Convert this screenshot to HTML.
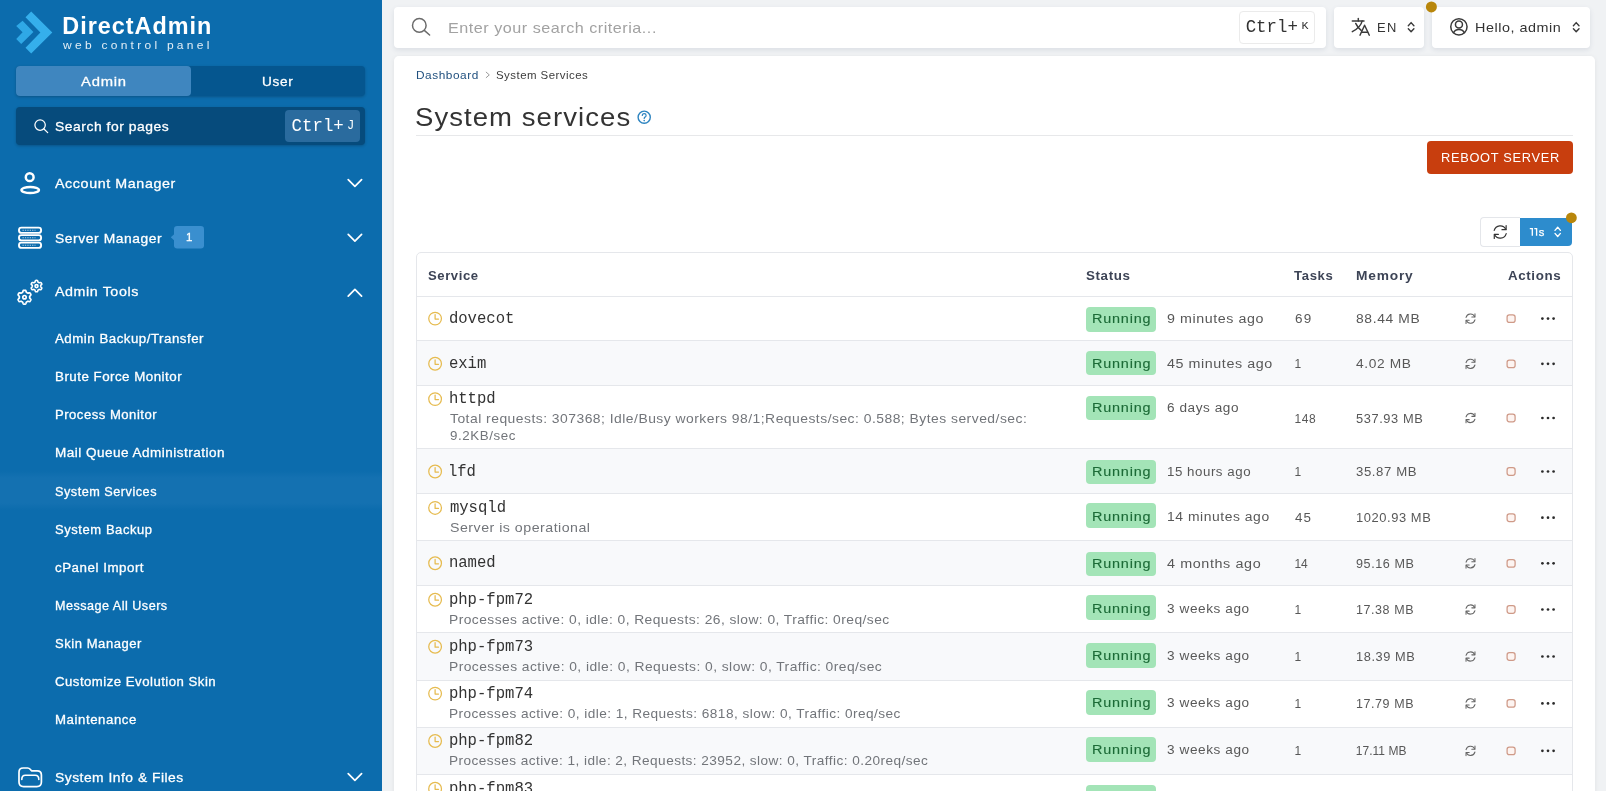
<!DOCTYPE html>
<html lang="en">
<head>
<meta charset="utf-8">
<title>System services - DirectAdmin</title>
<style>
*{box-sizing:border-box;margin:0;padding:0}
html,body{width:1606px;height:791px;overflow:hidden}
body{background:#f0f2f4;font-family:"Liberation Sans",sans-serif;color:#333;position:relative}
.tx{position:absolute;white-space:nowrap;transform-origin:0 50%}
.mono{font-family:"Liberation Mono",monospace}
#side .tx{-webkit-text-stroke:.28px #fff}
#side .mono,#side .thin{-webkit-text-stroke:0}
.a{position:absolute}
#app{position:absolute;left:0;top:0;width:1606px;height:791px;overflow:hidden;will-change:transform}
#side{position:absolute;left:0;top:0;width:382px;height:791px;background:#0c6cad}
.tabs{position:absolute;left:16px;top:66px;width:349px;height:30px;border-radius:4px;background:#05568f;box-shadow:0 1px 3px rgba(0,0,0,.22)}
.tabs .on{position:absolute;left:0;top:0;width:175px;height:30px;border-radius:4px;background:#3f86bf}
.psearch{position:absolute;left:16px;top:107px;width:349px;height:37.5px;border-radius:4px;background:#064b7c;box-shadow:0 1px 3px rgba(0,0,0,.22)}
.kbd1{position:absolute;left:285px;top:110px;width:75px;height:31.8px;border-radius:4px;background:#2a6b9e}
.actband{position:absolute;left:0;top:471px;width:382px;height:39px;background:linear-gradient(to bottom,#0c6cad 0,#1471b1 18%,#1471b1 82%,#0c6cad 100%)}
.box{position:absolute;top:7px;height:41px;background:#fff;border-radius:4px;box-shadow:0 2px 5px rgba(80,90,120,.13)}
#card{position:absolute;left:394px;top:56px;width:1201px;height:760px;background:#fff;border-radius:5px;box-shadow:0 1px 5px rgba(0,0,0,.07)}
#tbl{position:absolute;left:416px;top:252px;width:1157px;height:560px;border:1px solid #e5e7eb;border-radius:5px;background:#fff;overflow:hidden}
.row{position:absolute;left:417px;width:1155px;border-top:1px solid #e5e7eb}
.row.alt{background:#f8f9fb}
.bd{position:absolute;left:1086px;width:70px;height:24.6px;border-radius:4px;background:#a3e4b7}
</style>
</head>
<body>
<div id="app">
<div id="side"><div class="tabs"><div class="on"></div></div><div class="psearch"></div><div class="kbd1"></div><div class="actband"></div><svg class="a" style="left:0;top:0" width="382" height="791" viewBox="0 0 382 791"><path d="M31.2 11.4 L52.3 32.4 L31.2 53.5 L25.5 47.7 L40.4 32.4 L25.5 17.2 Z" fill="#35afec"/><path d="M22.6 20.8 L33.4 32 L21.2 44 L16.2 38.9 L22.6 32.3 L16.2 25.9 Z" fill="#2fa8e6"/><circle cx="40.1" cy="125.1" r="5.2" fill="none" stroke="#fff" stroke-width="1.25"/><path d="M44 129 L47.7 132.6" stroke="#fff" stroke-width="1.25" stroke-linecap="round"/><circle cx="29.7" cy="177.2" r="3.9" fill="none" stroke="#fff" stroke-width="2.5"/><ellipse cx="30.2" cy="190" rx="8.7" ry="3.1" fill="none" stroke="#fff" stroke-width="2.5"/><rect x="19" y="227.6" width="22.1" height="5.3" rx="2.4" fill="none" stroke="#fff" stroke-width="1.9"/><path d="M22.5 230.25 h13" stroke="#fff" stroke-width="0.8" stroke-dasharray="1.3 1.1" opacity=".85"/><rect x="19" y="235.1" width="22.1" height="5.3" rx="2.4" fill="none" stroke="#fff" stroke-width="1.9"/><path d="M22.5 237.75 h13" stroke="#fff" stroke-width="0.8" stroke-dasharray="1.3 1.1" opacity=".85"/><rect x="19" y="242.6" width="22.1" height="5.3" rx="2.4" fill="none" stroke="#fff" stroke-width="1.9"/><path d="M22.5 245.25 h13" stroke="#fff" stroke-width="0.8" stroke-dasharray="1.3 1.1" opacity=".85"/><path d="M170.8 237.3 L175 233.4 L175 241.2 Z" fill="#3a8fcf"/><rect x="174" y="226" width="30" height="22.5" rx="3.2" fill="#3a8fcf"/><path d="M29.70 297.20 L29.69 296.84 L29.65 296.48 L29.93 296.05 L30.48 295.49 L30.94 294.85 L30.80 294.39 L30.59 293.96 L30.35 293.54 L30.08 293.14 L29.75 292.79 L28.97 292.88 L28.21 293.07 L27.70 293.10 L27.41 292.89 L27.10 292.70 L26.78 292.53 L26.45 292.38 L26.22 291.92 L26.00 291.17 L25.69 290.45 L25.22 290.34 L24.74 290.30 L24.26 290.30 L23.78 290.34 L23.31 290.45 L23.00 291.17 L22.78 291.92 L22.55 292.38 L22.22 292.53 L21.90 292.70 L21.59 292.89 L21.30 293.10 L20.79 293.07 L20.03 292.88 L19.25 292.79 L18.92 293.14 L18.65 293.54 L18.41 293.96 L18.20 294.39 L18.06 294.85 L18.52 295.49 L19.07 296.05 L19.35 296.48 L19.31 296.84 L19.30 297.20 L19.31 297.56 L19.35 297.92 L19.07 298.35 L18.52 298.91 L18.06 299.55 L18.20 300.01 L18.41 300.44 L18.65 300.86 L18.92 301.26 L19.25 301.61 L20.03 301.52 L20.79 301.33 L21.30 301.30 L21.59 301.51 L21.90 301.70 L22.22 301.87 L22.55 302.02 L22.78 302.48 L23.00 303.23 L23.31 303.95 L23.78 304.06 L24.26 304.10 L24.74 304.10 L25.22 304.06 L25.69 303.95 L26.00 303.23 L26.22 302.48 L26.45 302.02 L26.78 301.87 L27.10 301.70 L27.41 301.51 L27.70 301.30 L28.21 301.33 L28.97 301.52 L29.75 301.61 L30.08 301.26 L30.35 300.86 L30.59 300.44 L30.80 300.01 L30.94 299.55 L30.48 298.91 L29.93 298.35 L29.65 297.92 L29.69 297.56 Z" fill="none" stroke="#fff" stroke-width="1.7" stroke-linejoin="round"/><circle cx="24.5" cy="297.2" r="1.7" fill="none" stroke="#fff" stroke-width="1.7"/><path d="M40.70 286.10 L40.69 285.81 L40.66 285.52 L40.91 285.16 L41.40 284.69 L41.82 284.16 L41.71 283.78 L41.53 283.42 L41.33 283.08 L41.11 282.75 L40.84 282.46 L40.17 282.56 L39.52 282.75 L39.09 282.79 L38.85 282.62 L38.60 282.46 L38.34 282.33 L38.07 282.21 L37.89 281.81 L37.73 281.15 L37.48 280.52 L37.10 280.43 L36.70 280.40 L36.30 280.40 L35.90 280.43 L35.52 280.52 L35.27 281.15 L35.11 281.81 L34.93 282.21 L34.66 282.33 L34.40 282.46 L34.15 282.62 L33.91 282.79 L33.48 282.75 L32.83 282.56 L32.16 282.46 L31.89 282.75 L31.67 283.08 L31.47 283.42 L31.29 283.78 L31.18 284.16 L31.60 284.69 L32.09 285.16 L32.34 285.52 L32.31 285.81 L32.30 286.10 L32.31 286.39 L32.34 286.68 L32.09 287.04 L31.60 287.51 L31.18 288.04 L31.29 288.42 L31.47 288.78 L31.67 289.12 L31.89 289.45 L32.16 289.74 L32.83 289.64 L33.48 289.45 L33.91 289.41 L34.15 289.58 L34.40 289.74 L34.66 289.87 L34.93 289.99 L35.11 290.39 L35.27 291.05 L35.52 291.68 L35.90 291.77 L36.30 291.80 L36.70 291.80 L37.10 291.77 L37.48 291.68 L37.73 291.05 L37.89 290.39 L38.07 289.99 L38.34 289.87 L38.60 289.74 L38.85 289.58 L39.09 289.41 L39.52 289.45 L40.17 289.64 L40.84 289.74 L41.11 289.45 L41.33 289.12 L41.53 288.78 L41.71 288.42 L41.82 288.04 L41.40 287.51 L40.91 287.04 L40.66 286.68 L40.69 286.39 Z" fill="none" stroke="#fff" stroke-width="1.6" stroke-linejoin="round"/><circle cx="36.5" cy="286.1" r="1.5" fill="none" stroke="#fff" stroke-width="1.6"/><path d="M19 772.2 q0 -4.2 4.2 -4.2 h4.4 q1.6 0 2.6 1.2 l1.3 1.6 h5.7 q4.2 0 4.2 4.2 v7 q0 4.6 -4.6 4.6 h-13.2 q-4.6 0 -4.6 -4.6 Z" fill="none" stroke="#fff" stroke-width="1.7" stroke-linejoin="round"/><path d="M21.8 779.4 q0 -4.2 3.6 -4.2 h9.8 q3.6 0 3.6 4.2" fill="none" stroke="#fff" stroke-width="1.6" stroke-linecap="round"/><path d="M348.2 179.6 L354.9 186.4 L361.6 179.6" fill="none" stroke="#fff" stroke-width="1.7" stroke-linecap="round" stroke-linejoin="round"/><path d="M348.2 234.29999999999998 L354.9 241.1 L361.6 234.29999999999998" fill="none" stroke="#fff" stroke-width="1.7" stroke-linecap="round" stroke-linejoin="round"/><path d="M348.2 296.20000000000005 L354.9 289.40000000000003 L361.6 296.20000000000005" fill="none" stroke="#fff" stroke-width="1.7" stroke-linecap="round" stroke-linejoin="round"/><path d="M348.2 773.6 L354.9 780.4 L361.6 773.6" fill="none" stroke="#fff" stroke-width="1.7" stroke-linecap="round" stroke-linejoin="round"/></svg><span class="tx" style="left:62.3px;top:11px;font-size:23.4px;line-height:30px;color:#fff;font-weight:bold;letter-spacing:1.002px;-webkit-text-stroke:0;">DirectAdmin</span><span class="tx" style="left:63.1px;top:39px;font-size:10px;line-height:14px;color:#fff;letter-spacing:2.724px;transform:scaleX(1.2000);opacity:.88;-webkit-text-stroke:0;">web control panel</span><span class="tx" style="left:81.0px;top:73px;font-size:13px;line-height:18px;color:#fff;letter-spacing:0.689px;transform:scaleX(1.1378);">Admin</span><span class="tx" style="left:261.66px;top:73px;font-size:13px;line-height:18px;color:#fff;letter-spacing:0.680px;transform:scaleX(1.0425);">User</span><span class="tx" style="left:54.7px;top:118px;font-size:13px;line-height:18px;color:#fff;letter-spacing:0.499px;transform:scaleX(1.0673);">Search for pages</span><span class="tx mono" style="left:291.6px;top:116px;font-size:17.4px;line-height:22px;color:#fff;transform:scaleY(1.06);transform-origin:0 74%;">Ctrl+</span><span class="tx mono" style="left:347.1px;top:119px;font-size:12px;line-height:14px;color:#fff;">J</span><span class="tx" style="left:54.9px;top:174px;font-size:13px;line-height:19px;color:#fff;letter-spacing:0.551px;transform:scaleX(1.0972);">Account Manager</span><span class="tx" style="left:54.9px;top:229px;font-size:13px;line-height:19px;color:#fff;letter-spacing:0.544px;transform:scaleX(1.0639);">Server Manager</span><span class="tx" style="left:186px;top:228px;font-size:11.5px;line-height:18px;color:#fff;">1</span><span class="tx" style="left:54.9px;top:282px;font-size:13px;line-height:19px;color:#fff;letter-spacing:0.537px;transform:scaleX(1.0968);">Admin Tools</span><span class="tx" style="left:54.9px;top:331px;font-size:12px;line-height:17px;color:#fff;letter-spacing:0.470px;transform:scaleX(1.1053);">Admin Backup/Transfer</span><span class="tx" style="left:54.9px;top:369px;font-size:12px;line-height:17px;color:#fff;letter-spacing:0.443px;transform:scaleX(1.1103);">Brute Force Monitor</span><span class="tx" style="left:54.9px;top:407px;font-size:12px;line-height:17px;color:#fff;letter-spacing:0.466px;transform:scaleX(1.0898);">Process Monitor</span><span class="tx" style="left:54.9px;top:445px;font-size:12px;line-height:17px;color:#fff;letter-spacing:0.439px;transform:scaleX(1.1255);">Mail Queue Administration</span><span class="tx" style="left:54.9px;top:484px;font-size:12px;line-height:17px;color:#fff;letter-spacing:0.480px;transform:scaleX(1.0564);">System Services</span><span class="tx" style="left:54.9px;top:522px;font-size:12px;line-height:17px;color:#fff;letter-spacing:0.525px;transform:scaleX(1.0823);">System Backup</span><span class="tx" style="left:54.9px;top:560px;font-size:12px;line-height:17px;color:#fff;letter-spacing:0.469px;transform:scaleX(1.1118);">cPanel Import</span><span class="tx" style="left:54.9px;top:598px;font-size:12px;line-height:17px;color:#fff;letter-spacing:0.471px;transform:scaleX(1.0487);">Message All Users</span><span class="tx" style="left:54.9px;top:636px;font-size:12px;line-height:17px;color:#fff;letter-spacing:0.507px;transform:scaleX(1.0852);">Skin Manager</span><span class="tx" style="left:54.9px;top:674px;font-size:12px;line-height:17px;color:#fff;letter-spacing:0.443px;transform:scaleX(1.0984);">Customize Evolution Skin</span><span class="tx" style="left:54.9px;top:712px;font-size:12px;line-height:17px;color:#fff;letter-spacing:0.520px;transform:scaleX(1.1006);">Maintenance</span><span class="tx" style="left:54.9px;top:768px;font-size:13px;line-height:19px;color:#fff;letter-spacing:0.470px;transform:scaleX(1.0641);">System Info &amp; Files</span></div>
<div class="box" style="left:394px;width:931.6px"></div><div class="box" style="left:1333.8px;width:90.4px"></div><div class="box" style="left:1431.7px;width:158.1px"></div><div class="a" style="left:1239px;top:11.2px;width:75.6px;height:32.4px;border:1px solid #ebebeb;border-radius:4px;background:#fff"></div><div id="card"></div><span class="tx" style="left:448.19px;top:18px;font-size:14.6px;line-height:20px;color:#a2a2a2;letter-spacing:0.465px;transform:scaleX(1.1071);">Enter your search criteria...</span><span class="tx mono" style="left:1245.7px;top:17px;font-size:17.4px;line-height:22px;color:#333;transform:scaleY(1.06);transform-origin:0 74%;">Ctrl+</span><span class="tx mono" style="left:1301.6px;top:19px;font-size:11.6px;line-height:14px;color:#333;">K</span><span class="tx" style="left:1377.07px;top:20px;font-size:12.6px;line-height:17px;color:#333;letter-spacing:1.234px;transform:scaleX(1.0264);">EN</span><span class="tx" style="left:1475.48px;top:19px;font-size:12.8px;line-height:18px;color:#333;letter-spacing:0.479px;transform:scaleX(1.1225);">Hello, admin</span><span class="tx" style="left:416.0px;top:68px;font-size:11.2px;line-height:15px;color:#1f4f7e;letter-spacing:0.513px;transform:scaleX(1.0595);">Dashboard</span><span class="tx" style="left:495.7px;top:68px;font-size:11.2px;line-height:15px;color:#3c3c3c;letter-spacing:0.450px;transform:scaleX(1.0243);">System Services</span><span class="tx" style="left:414.92px;top:100px;font-size:25.4px;line-height:34px;color:#333;letter-spacing:0.985px;transform:scaleX(1.0832);">System services</span><div class="a" style="left:416px;top:135px;width:1157px;height:1px;background:#e7e8ea"></div><div class="a" style="left:1427px;top:141px;width:146px;height:33px;border-radius:4px;background:#c83e0e"></div><span class="tx" style="left:1440.59px;top:150px;font-size:12.7px;line-height:17px;color:#fff;letter-spacing:0.677px;transform:scaleX(1.0112);">REBOOT SERVER</span><div class="a" style="left:1480px;top:217px;width:40.4px;height:29.6px;border:1px solid #e4e6ea;border-right:0;border-radius:4px 0 0 4px;background:#fff"></div><div class="a" style="left:1520px;top:218px;width:52px;height:28px;border-radius:0 4px 4px 0;background:#2d8ccd"></div><span class="tx" style="left:1538.8px;top:224px;font-size:11.2px;line-height:16px;color:#fff;-webkit-text-stroke:.25px #fff;">s</span><div id="tbl"></div><span class="tx" style="left:427.7px;top:268px;font-size:12px;line-height:17px;color:#3d4456;font-weight:bold;letter-spacing:0.540px;transform:scaleX(1.0893);">Service</span><span class="tx" style="left:1085.9px;top:268px;font-size:12px;line-height:17px;color:#3d4456;font-weight:bold;letter-spacing:0.557px;transform:scaleX(1.1135);">Status</span><span class="tx" style="left:1294.3px;top:268px;font-size:12px;line-height:17px;color:#3d4456;font-weight:bold;letter-spacing:0.630px;transform:scaleX(1.0895);">Tasks</span><span class="tx" style="left:1356.1px;top:268px;font-size:12px;line-height:17px;color:#3d4456;font-weight:bold;letter-spacing:0.698px;transform:scaleX(1.1459);">Memory</span><span class="tx" style="left:1507.8px;top:268px;font-size:12px;line-height:17px;color:#3d4456;font-weight:bold;letter-spacing:0.556px;transform:scaleX(1.1119);">Actions</span><div class="row" style="top:296px;height:44px"></div><span class="tx mono" style="left:448.9px;top:309px;font-size:15.6px;line-height:20px;color:#333;">dovecot</span><div class="bd" style="top:307px;height:25px"></div><span class="tx" style="left:1091.8px;top:310px;font-size:12px;line-height:18px;color:#1c6b37;letter-spacing:0.676px;transform:scaleX(1.2000);-webkit-text-stroke:.12px #1c6b37;">Running</span><span class="tx" style="left:1167.2px;top:311px;font-size:12px;line-height:17px;color:#585858;letter-spacing:0.475px;transform:scaleX(1.1879);">9 minutes ago</span><span class="tx" style="left:1294.6px;top:311px;font-size:12px;line-height:17px;color:#585858;letter-spacing:1.029px;transform:scaleX(1.1222);">69</span><span class="tx" style="left:1355.8px;top:311px;font-size:12px;line-height:17px;color:#585858;letter-spacing:0.552px;transform:scaleX(1.1535);">88.44 MB</span><div class="row alt" style="top:340px;height:45px"></div><span class="tx mono" style="left:448.9px;top:354px;font-size:15.6px;line-height:20px;color:#333;">exim</span><div class="bd" style="top:351px;height:24px"></div><span class="tx" style="left:1091.8px;top:355px;font-size:12px;line-height:18px;color:#1c6b37;letter-spacing:0.676px;transform:scaleX(1.2000);-webkit-text-stroke:.12px #1c6b37;">Running</span><span class="tx" style="left:1167.2px;top:356px;font-size:12px;line-height:17px;color:#585858;letter-spacing:0.477px;transform:scaleX(1.1921);">45 minutes ago</span><span class="tx" style="left:1294.6px;top:356px;font-size:12px;line-height:17px;color:#585858;">1</span><span class="tx" style="left:1355.8px;top:356px;font-size:12px;line-height:17px;color:#585858;letter-spacing:0.561px;transform:scaleX(1.1447);">4.02 MB</span><div class="row" style="top:385px;height:63px"></div><span class="tx mono" style="left:448.9px;top:389px;font-size:15.6px;line-height:20px;color:#333;">httpd</span><span class="tx" style="left:449.9px;top:411px;font-size:12.2px;line-height:17px;color:#72757a;letter-spacing:0.422px;transform:scaleX(1.1393);">Total requests: 307368; Idle/Busy workers 98/1;Requests/sec: 0.588; Bytes served/sec:</span><span class="tx" style="left:449.9px;top:428px;font-size:12.2px;line-height:17px;color:#72757a;letter-spacing:0.522px;transform:scaleX(1.0950);">9.2KB/sec</span><div class="bd" style="top:396px;height:24px"></div><span class="tx" style="left:1091.8px;top:399px;font-size:12px;line-height:18px;color:#1c6b37;letter-spacing:0.676px;transform:scaleX(1.2000);-webkit-text-stroke:.12px #1c6b37;">Running</span><span class="tx" style="left:1167.2px;top:400px;font-size:12px;line-height:17px;color:#585858;letter-spacing:0.494px;transform:scaleX(1.1311);">6 days ago</span><span class="tx" style="left:1294.6px;top:411px;font-size:12px;line-height:17px;color:#585858;letter-spacing:0.576px;">148</span><span class="tx" style="left:1355.8px;top:411px;font-size:12px;line-height:17px;color:#585858;letter-spacing:0.546px;transform:scaleX(1.0689);">537.93 MB</span><div class="row alt" style="top:448px;height:45px"></div><span class="tx mono" style="left:447.9px;top:462px;font-size:15.6px;line-height:20px;color:#333;">lfd</span><div class="bd" style="top:460px;height:24px"></div><span class="tx" style="left:1091.8px;top:463px;font-size:12px;line-height:18px;color:#1c6b37;letter-spacing:0.676px;transform:scaleX(1.2000);-webkit-text-stroke:.12px #1c6b37;">Running</span><span class="tx" style="left:1167.2px;top:464px;font-size:12px;line-height:17px;color:#585858;letter-spacing:0.482px;transform:scaleX(1.1086);">15 hours ago</span><span class="tx" style="left:1294.6px;top:464px;font-size:12px;line-height:17px;color:#585858;">1</span><span class="tx" style="left:1355.8px;top:464px;font-size:12px;line-height:17px;color:#585858;letter-spacing:0.552px;transform:scaleX(1.0973);">35.87 MB</span><div class="row" style="top:493px;height:47px"></div><span class="tx mono" style="left:449.9px;top:498px;font-size:15.6px;line-height:20px;color:#333;">mysqld</span><span class="tx" style="left:449.9px;top:520px;font-size:12.2px;line-height:17px;color:#72757a;letter-spacing:0.418px;transform:scaleX(1.1655);">Server is operational</span><div class="bd" style="top:503px;height:25px"></div><span class="tx" style="left:1091.8px;top:508px;font-size:12px;line-height:18px;color:#1c6b37;letter-spacing:0.676px;transform:scaleX(1.2000);-webkit-text-stroke:.12px #1c6b37;">Running</span><span class="tx" style="left:1167.2px;top:509px;font-size:12px;line-height:17px;color:#585858;letter-spacing:0.477px;transform:scaleX(1.1571);">14 minutes ago</span><span class="tx" style="left:1294.6px;top:510px;font-size:12px;line-height:17px;color:#585858;letter-spacing:1.029px;transform:scaleX(1.1154);">45</span><span class="tx" style="left:1355.8px;top:510px;font-size:12px;line-height:17px;color:#585858;letter-spacing:0.541px;transform:scaleX(1.0751);">1020.93 MB</span><div class="row alt" style="top:540px;height:45px"></div><span class="tx mono" style="left:448.9px;top:553px;font-size:15.6px;line-height:20px;color:#333;">named</span><div class="bd" style="top:552px;height:24px"></div><span class="tx" style="left:1091.8px;top:555px;font-size:12px;line-height:18px;color:#1c6b37;letter-spacing:0.676px;transform:scaleX(1.2000);-webkit-text-stroke:.12px #1c6b37;">Running</span><span class="tx" style="left:1167.2px;top:556px;font-size:12px;line-height:17px;color:#585858;letter-spacing:0.500px;transform:scaleX(1.1969);">4 months ago</span><span class="tx" style="left:1294.6px;top:556px;font-size:12px;line-height:17px;color:#585858;letter-spacing:-0.374px;">14</span><span class="tx" style="left:1355.8px;top:556px;font-size:12px;line-height:17px;color:#585858;letter-spacing:0.552px;transform:scaleX(1.0502);">95.16 MB</span><div class="row" style="top:585px;height:47px"></div><span class="tx mono" style="left:448.9px;top:590px;font-size:15.6px;line-height:20px;color:#333;">php-fpm72</span><span class="tx" style="left:448.77px;top:612px;font-size:12.2px;line-height:17px;color:#72757a;letter-spacing:0.393px;transform:scaleX(1.1326);">Processes active: 0, idle: 0, Requests: 26, slow: 0, Traffic: 0req/sec</span><div class="bd" style="top:595px;height:25px"></div><span class="tx" style="left:1091.8px;top:600px;font-size:12px;line-height:18px;color:#1c6b37;letter-spacing:0.676px;transform:scaleX(1.2000);-webkit-text-stroke:.12px #1c6b37;">Running</span><span class="tx" style="left:1167.2px;top:601px;font-size:12px;line-height:17px;color:#585858;letter-spacing:0.510px;transform:scaleX(1.1333);">3 weeks ago</span><span class="tx" style="left:1294.6px;top:602px;font-size:12px;line-height:17px;color:#585858;">1</span><span class="tx" style="left:1355.8px;top:602px;font-size:12px;line-height:17px;color:#585858;letter-spacing:0.552px;transform:scaleX(1.0412);">17.38 MB</span><div class="row alt" style="top:632px;height:48px"></div><span class="tx mono" style="left:448.9px;top:637px;font-size:15.6px;line-height:20px;color:#333;">php-fpm73</span><span class="tx" style="left:448.77px;top:659px;font-size:12.2px;line-height:17px;color:#72757a;letter-spacing:0.392px;transform:scaleX(1.1346);">Processes active: 0, idle: 0, Requests: 0, slow: 0, Traffic: 0req/sec</span><div class="bd" style="top:643px;height:25px"></div><span class="tx" style="left:1091.8px;top:647px;font-size:12px;line-height:18px;color:#1c6b37;letter-spacing:0.676px;transform:scaleX(1.2000);-webkit-text-stroke:.12px #1c6b37;">Running</span><span class="tx" style="left:1167.2px;top:648px;font-size:12px;line-height:17px;color:#585858;letter-spacing:0.510px;transform:scaleX(1.1333);">3 weeks ago</span><span class="tx" style="left:1294.6px;top:649px;font-size:12px;line-height:17px;color:#585858;">1</span><span class="tx" style="left:1355.8px;top:649px;font-size:12px;line-height:17px;color:#585858;letter-spacing:0.552px;transform:scaleX(1.0647);">18.39 MB</span><div class="row" style="top:680px;height:47px"></div><span class="tx mono" style="left:448.9px;top:684px;font-size:15.6px;line-height:20px;color:#333;">php-fpm74</span><span class="tx" style="left:448.78px;top:706px;font-size:12.2px;line-height:17px;color:#72757a;letter-spacing:0.397px;transform:scaleX(1.1192);">Processes active: 0, idle: 1, Requests: 6818, slow: 0, Traffic: 0req/sec</span><div class="bd" style="top:690px;height:25px"></div><span class="tx" style="left:1091.8px;top:694px;font-size:12px;line-height:18px;color:#1c6b37;letter-spacing:0.676px;transform:scaleX(1.2000);-webkit-text-stroke:.12px #1c6b37;">Running</span><span class="tx" style="left:1167.2px;top:695px;font-size:12px;line-height:17px;color:#585858;letter-spacing:0.510px;transform:scaleX(1.1333);">3 weeks ago</span><span class="tx" style="left:1294.6px;top:696px;font-size:12px;line-height:17px;color:#585858;">1</span><span class="tx" style="left:1355.8px;top:696px;font-size:12px;line-height:17px;color:#585858;letter-spacing:0.552px;transform:scaleX(1.0412);">17.79 MB</span><div class="row alt" style="top:727px;height:47px"></div><span class="tx mono" style="left:448.9px;top:731px;font-size:15.6px;line-height:20px;color:#333;">php-fpm82</span><span class="tx" style="left:448.78px;top:753px;font-size:12.2px;line-height:17px;color:#72757a;letter-spacing:0.399px;transform:scaleX(1.1167);">Processes active: 1, idle: 2, Requests: 23952, slow: 0, Traffic: 0.20req/sec</span><div class="bd" style="top:737px;height:25px"></div><span class="tx" style="left:1091.8px;top:741px;font-size:12px;line-height:18px;color:#1c6b37;letter-spacing:0.676px;transform:scaleX(1.2000);-webkit-text-stroke:.12px #1c6b37;">Running</span><span class="tx" style="left:1167.2px;top:742px;font-size:12px;line-height:17px;color:#585858;letter-spacing:0.510px;transform:scaleX(1.1333);">3 weeks ago</span><span class="tx" style="left:1294.6px;top:743px;font-size:12px;line-height:17px;color:#585858;">1</span><span class="tx" style="left:1355.8px;top:743px;font-size:12px;line-height:17px;color:#585858;letter-spacing:0.019px;">17.11 MB</span><div class="row" style="top:774px;height:47px"></div><span class="tx mono" style="left:448.9px;top:779px;font-size:15.6px;line-height:20px;color:#333;">php-fpm83</span><span class="tx" style="left:448.77px;top:801px;font-size:12.2px;line-height:17px;color:#72757a;letter-spacing:0.392px;transform:scaleX(1.1346);">Processes active: 0, idle: 0, Requests: 0, slow: 0, Traffic: 0req/sec</span><div class="bd" style="top:785px;height:25px"></div><span class="tx" style="left:1091.8px;top:789px;font-size:12px;line-height:18px;color:#1c6b37;letter-spacing:0.676px;transform:scaleX(1.2000);-webkit-text-stroke:.12px #1c6b37;">Running</span><span class="tx" style="left:1167.2px;top:790px;font-size:12px;line-height:17px;color:#585858;letter-spacing:0.510px;transform:scaleX(1.1333);">3 weeks ago</span><span class="tx" style="left:1294.6px;top:791px;font-size:12px;line-height:17px;color:#585858;">1</span><span class="tx" style="left:1355.8px;top:791px;font-size:12px;line-height:17px;color:#585858;letter-spacing:0.552px;transform:scaleX(1.0502);">18.00 MB</span><svg class="a" style="left:416px;top:252px" width="1157" height="539" viewBox="416 252 1157 539"><circle cx="435.1" cy="318.6" r="6.35" fill="none" stroke="#e6bb4f" stroke-width="1.25"/><path d="M435.1 314.6 V319.1 H438.5" fill="none" stroke="#e6bb4f" stroke-width="1.25" stroke-linecap="round" stroke-linejoin="round"/><path d="M1466.06 317.41 A4.6 4.6 0 0 1 1474.67 316.66" fill="none" stroke="#666" stroke-width="1.05" stroke-linecap="round"/><path d="M1474.94 319.79 A4.6 4.6 0 0 1 1466.33 320.54" fill="none" stroke="#666" stroke-width="1.05" stroke-linecap="round"/><path d="M1474.97 313.80 L1474.97 316.96 L1471.82 316.96" fill="none" stroke="#666" stroke-width="1.05" stroke-linecap="round" stroke-linejoin="round"/><path d="M1466.03 323.40 L1466.03 320.24 L1469.18 320.24" fill="none" stroke="#666" stroke-width="1.05" stroke-linecap="round" stroke-linejoin="round"/><rect x="1507.1" y="314.8" width="8" height="7.6" rx="2.2" fill="#fdf4f1" stroke="#cf9a88" stroke-width="1.25"/><circle cx="1542.4" cy="318.6" r="1.35" fill="#2b2b2b"/><circle cx="1548" cy="318.6" r="1.35" fill="#2b2b2b"/><circle cx="1553.6" cy="318.6" r="1.35" fill="#2b2b2b"/><circle cx="435.1" cy="363.8" r="6.35" fill="none" stroke="#e6bb4f" stroke-width="1.25"/><path d="M435.1 359.8 V364.3 H438.5" fill="none" stroke="#e6bb4f" stroke-width="1.25" stroke-linecap="round" stroke-linejoin="round"/><path d="M1466.06 362.61 A4.6 4.6 0 0 1 1474.67 361.86" fill="none" stroke="#666" stroke-width="1.05" stroke-linecap="round"/><path d="M1474.94 364.99 A4.6 4.6 0 0 1 1466.33 365.74" fill="none" stroke="#666" stroke-width="1.05" stroke-linecap="round"/><path d="M1474.97 359.00 L1474.97 362.16 L1471.82 362.16" fill="none" stroke="#666" stroke-width="1.05" stroke-linecap="round" stroke-linejoin="round"/><path d="M1466.03 368.60 L1466.03 365.44 L1469.18 365.44" fill="none" stroke="#666" stroke-width="1.05" stroke-linecap="round" stroke-linejoin="round"/><rect x="1507.1" y="360.0" width="8" height="7.6" rx="2.2" fill="#fdf4f1" stroke="#cf9a88" stroke-width="1.25"/><circle cx="1542.4" cy="363.8" r="1.35" fill="#2b2b2b"/><circle cx="1548" cy="363.8" r="1.35" fill="#2b2b2b"/><circle cx="1553.6" cy="363.8" r="1.35" fill="#2b2b2b"/><circle cx="435.1" cy="399.1" r="6.35" fill="none" stroke="#e6bb4f" stroke-width="1.25"/><path d="M435.1 395.1 V399.6 H438.5" fill="none" stroke="#e6bb4f" stroke-width="1.25" stroke-linecap="round" stroke-linejoin="round"/><path d="M1466.06 416.81 A4.6 4.6 0 0 1 1474.67 416.06" fill="none" stroke="#666" stroke-width="1.05" stroke-linecap="round"/><path d="M1474.94 419.19 A4.6 4.6 0 0 1 1466.33 419.94" fill="none" stroke="#666" stroke-width="1.05" stroke-linecap="round"/><path d="M1474.97 413.20 L1474.97 416.36 L1471.82 416.36" fill="none" stroke="#666" stroke-width="1.05" stroke-linecap="round" stroke-linejoin="round"/><path d="M1466.03 422.80 L1466.03 419.64 L1469.18 419.64" fill="none" stroke="#666" stroke-width="1.05" stroke-linecap="round" stroke-linejoin="round"/><rect x="1507.1" y="414.2" width="8" height="7.6" rx="2.2" fill="#fdf4f1" stroke="#cf9a88" stroke-width="1.25"/><circle cx="1542.4" cy="418.0" r="1.35" fill="#2b2b2b"/><circle cx="1548" cy="418.0" r="1.35" fill="#2b2b2b"/><circle cx="1553.6" cy="418.0" r="1.35" fill="#2b2b2b"/><circle cx="435.1" cy="471.5" r="6.35" fill="none" stroke="#e6bb4f" stroke-width="1.25"/><path d="M435.1 467.5 V472.0 H438.5" fill="none" stroke="#e6bb4f" stroke-width="1.25" stroke-linecap="round" stroke-linejoin="round"/><rect x="1507.1" y="467.7" width="8" height="7.6" rx="2.2" fill="#fdf4f1" stroke="#cf9a88" stroke-width="1.25"/><circle cx="1542.4" cy="471.5" r="1.35" fill="#2b2b2b"/><circle cx="1548" cy="471.5" r="1.35" fill="#2b2b2b"/><circle cx="1553.6" cy="471.5" r="1.35" fill="#2b2b2b"/><circle cx="435.1" cy="507.9" r="6.35" fill="none" stroke="#e6bb4f" stroke-width="1.25"/><path d="M435.1 503.9 V508.4 H438.5" fill="none" stroke="#e6bb4f" stroke-width="1.25" stroke-linecap="round" stroke-linejoin="round"/><rect x="1507.1" y="513.9" width="8" height="7.6" rx="2.2" fill="#fdf4f1" stroke="#cf9a88" stroke-width="1.25"/><circle cx="1542.4" cy="517.7" r="1.35" fill="#2b2b2b"/><circle cx="1548" cy="517.7" r="1.35" fill="#2b2b2b"/><circle cx="1553.6" cy="517.7" r="1.35" fill="#2b2b2b"/><circle cx="435.1" cy="563.3" r="6.35" fill="none" stroke="#e6bb4f" stroke-width="1.25"/><path d="M435.1 559.3 V563.8 H438.5" fill="none" stroke="#e6bb4f" stroke-width="1.25" stroke-linecap="round" stroke-linejoin="round"/><path d="M1466.06 562.11 A4.6 4.6 0 0 1 1474.67 561.36" fill="none" stroke="#666" stroke-width="1.05" stroke-linecap="round"/><path d="M1474.94 564.49 A4.6 4.6 0 0 1 1466.33 565.24" fill="none" stroke="#666" stroke-width="1.05" stroke-linecap="round"/><path d="M1474.97 558.50 L1474.97 561.66 L1471.82 561.66" fill="none" stroke="#666" stroke-width="1.05" stroke-linecap="round" stroke-linejoin="round"/><path d="M1466.03 568.10 L1466.03 564.94 L1469.18 564.94" fill="none" stroke="#666" stroke-width="1.05" stroke-linecap="round" stroke-linejoin="round"/><rect x="1507.1" y="559.5" width="8" height="7.6" rx="2.2" fill="#fdf4f1" stroke="#cf9a88" stroke-width="1.25"/><circle cx="1542.4" cy="563.3" r="1.35" fill="#2b2b2b"/><circle cx="1548" cy="563.3" r="1.35" fill="#2b2b2b"/><circle cx="1553.6" cy="563.3" r="1.35" fill="#2b2b2b"/><circle cx="435.1" cy="599.7" r="6.35" fill="none" stroke="#e6bb4f" stroke-width="1.25"/><path d="M435.1 595.7 V600.2 H438.5" fill="none" stroke="#e6bb4f" stroke-width="1.25" stroke-linecap="round" stroke-linejoin="round"/><path d="M1466.06 608.31 A4.6 4.6 0 0 1 1474.67 607.56" fill="none" stroke="#666" stroke-width="1.05" stroke-linecap="round"/><path d="M1474.94 610.69 A4.6 4.6 0 0 1 1466.33 611.44" fill="none" stroke="#666" stroke-width="1.05" stroke-linecap="round"/><path d="M1474.97 604.70 L1474.97 607.86 L1471.82 607.86" fill="none" stroke="#666" stroke-width="1.05" stroke-linecap="round" stroke-linejoin="round"/><path d="M1466.03 614.30 L1466.03 611.14 L1469.18 611.14" fill="none" stroke="#666" stroke-width="1.05" stroke-linecap="round" stroke-linejoin="round"/><rect x="1507.1" y="605.7" width="8" height="7.6" rx="2.2" fill="#fdf4f1" stroke="#cf9a88" stroke-width="1.25"/><circle cx="1542.4" cy="609.5" r="1.35" fill="#2b2b2b"/><circle cx="1548" cy="609.5" r="1.35" fill="#2b2b2b"/><circle cx="1553.6" cy="609.5" r="1.35" fill="#2b2b2b"/><circle cx="435.1" cy="646.7" r="6.35" fill="none" stroke="#e6bb4f" stroke-width="1.25"/><path d="M435.1 642.7 V647.2 H438.5" fill="none" stroke="#e6bb4f" stroke-width="1.25" stroke-linecap="round" stroke-linejoin="round"/><path d="M1466.06 655.31 A4.6 4.6 0 0 1 1474.67 654.56" fill="none" stroke="#666" stroke-width="1.05" stroke-linecap="round"/><path d="M1474.94 657.69 A4.6 4.6 0 0 1 1466.33 658.44" fill="none" stroke="#666" stroke-width="1.05" stroke-linecap="round"/><path d="M1474.97 651.70 L1474.97 654.86 L1471.82 654.86" fill="none" stroke="#666" stroke-width="1.05" stroke-linecap="round" stroke-linejoin="round"/><path d="M1466.03 661.30 L1466.03 658.14 L1469.18 658.14" fill="none" stroke="#666" stroke-width="1.05" stroke-linecap="round" stroke-linejoin="round"/><rect x="1507.1" y="652.7" width="8" height="7.6" rx="2.2" fill="#fdf4f1" stroke="#cf9a88" stroke-width="1.25"/><circle cx="1542.4" cy="656.5" r="1.35" fill="#2b2b2b"/><circle cx="1548" cy="656.5" r="1.35" fill="#2b2b2b"/><circle cx="1553.6" cy="656.5" r="1.35" fill="#2b2b2b"/><circle cx="435.1" cy="693.6" r="6.35" fill="none" stroke="#e6bb4f" stroke-width="1.25"/><path d="M435.1 689.6 V694.1 H438.5" fill="none" stroke="#e6bb4f" stroke-width="1.25" stroke-linecap="round" stroke-linejoin="round"/><path d="M1466.06 702.21 A4.6 4.6 0 0 1 1474.67 701.46" fill="none" stroke="#666" stroke-width="1.05" stroke-linecap="round"/><path d="M1474.94 704.59 A4.6 4.6 0 0 1 1466.33 705.34" fill="none" stroke="#666" stroke-width="1.05" stroke-linecap="round"/><path d="M1474.97 698.60 L1474.97 701.76 L1471.82 701.76" fill="none" stroke="#666" stroke-width="1.05" stroke-linecap="round" stroke-linejoin="round"/><path d="M1466.03 708.20 L1466.03 705.04 L1469.18 705.04" fill="none" stroke="#666" stroke-width="1.05" stroke-linecap="round" stroke-linejoin="round"/><rect x="1507.1" y="699.6" width="8" height="7.6" rx="2.2" fill="#fdf4f1" stroke="#cf9a88" stroke-width="1.25"/><circle cx="1542.4" cy="703.4" r="1.35" fill="#2b2b2b"/><circle cx="1548" cy="703.4" r="1.35" fill="#2b2b2b"/><circle cx="1553.6" cy="703.4" r="1.35" fill="#2b2b2b"/><circle cx="435.1" cy="741.0" r="6.35" fill="none" stroke="#e6bb4f" stroke-width="1.25"/><path d="M435.1 737.0 V741.5 H438.5" fill="none" stroke="#e6bb4f" stroke-width="1.25" stroke-linecap="round" stroke-linejoin="round"/><path d="M1466.06 749.61 A4.6 4.6 0 0 1 1474.67 748.86" fill="none" stroke="#666" stroke-width="1.05" stroke-linecap="round"/><path d="M1474.94 751.99 A4.6 4.6 0 0 1 1466.33 752.74" fill="none" stroke="#666" stroke-width="1.05" stroke-linecap="round"/><path d="M1474.97 746.00 L1474.97 749.16 L1471.82 749.16" fill="none" stroke="#666" stroke-width="1.05" stroke-linecap="round" stroke-linejoin="round"/><path d="M1466.03 755.60 L1466.03 752.44 L1469.18 752.44" fill="none" stroke="#666" stroke-width="1.05" stroke-linecap="round" stroke-linejoin="round"/><rect x="1507.1" y="747.0" width="8" height="7.6" rx="2.2" fill="#fdf4f1" stroke="#cf9a88" stroke-width="1.25"/><circle cx="1542.4" cy="750.8" r="1.35" fill="#2b2b2b"/><circle cx="1548" cy="750.8" r="1.35" fill="#2b2b2b"/><circle cx="1553.6" cy="750.8" r="1.35" fill="#2b2b2b"/><circle cx="435.1" cy="788.8" r="6.35" fill="none" stroke="#e6bb4f" stroke-width="1.25"/><path d="M435.1 784.8 V789.3 H438.5" fill="none" stroke="#e6bb4f" stroke-width="1.25" stroke-linecap="round" stroke-linejoin="round"/><path d="M1466.06 797.41 A4.6 4.6 0 0 1 1474.67 796.66" fill="none" stroke="#666" stroke-width="1.05" stroke-linecap="round"/><path d="M1474.94 799.79 A4.6 4.6 0 0 1 1466.33 800.54" fill="none" stroke="#666" stroke-width="1.05" stroke-linecap="round"/><path d="M1474.97 793.80 L1474.97 796.96 L1471.82 796.96" fill="none" stroke="#666" stroke-width="1.05" stroke-linecap="round" stroke-linejoin="round"/><path d="M1466.03 803.40 L1466.03 800.24 L1469.18 800.24" fill="none" stroke="#666" stroke-width="1.05" stroke-linecap="round" stroke-linejoin="round"/><rect x="1507.1" y="794.8" width="8" height="7.6" rx="2.2" fill="#fdf4f1" stroke="#cf9a88" stroke-width="1.25"/><circle cx="1542.4" cy="798.6" r="1.35" fill="#2b2b2b"/><circle cx="1548" cy="798.6" r="1.35" fill="#2b2b2b"/><circle cx="1553.6" cy="798.6" r="1.35" fill="#2b2b2b"/></svg><svg class="a" style="left:382px;top:0" width="1224" height="200" viewBox="382 0 1224 200"><circle cx="419.3" cy="25.4" r="6.8" fill="none" stroke="#6b6b6b" stroke-width="1.5"/><path d="M424.3 30.4 L429.6 35" stroke="#6b6b6b" stroke-width="1.5" stroke-linecap="round"/><g fill="none" stroke="#3a3a3a" stroke-width="1.45" stroke-linecap="round" stroke-linejoin="round"><path d="M1352.3 20.9 h11.7"/><path d="M1358.3 18.4 v2.5"/><path d="M1362.2 20.9 q-1.6 6.6 -9.9 10.8"/><path d="M1355.7 23.4 q1.9 4.2 5.5 6.9"/><path d="M1360 35.2 L1364.6 25.2 L1369.3 35.2"/><path d="M1361.5 32.2 h6.2"/></g><path d="M1408.3 25.7 L1411.1 22.599999999999998 L1413.8999999999999 25.7" fill="none" stroke="#3a3a3a" stroke-width="1.4" stroke-linecap="round" stroke-linejoin="round"/><path d="M1408.3 28.7 L1411.1 31.8 L1413.8999999999999 28.7" fill="none" stroke="#3a3a3a" stroke-width="1.4" stroke-linecap="round" stroke-linejoin="round"/><circle cx="1431.4" cy="6.9" r="5.5" fill="#b8860b"/><g fill="none" stroke="#3a3a3a" stroke-width="1.5"><circle cx="1458.9" cy="26.8" r="8.15"/><circle cx="1458.95" cy="24.4" r="3.5"/><path d="M1453.2 33.2 q1.6 -3.8 5.75 -3.8 t5.75 3.8"/></g><path d="M1573.4 25.7 L1576.2 22.599999999999998 L1579.0 25.7" fill="none" stroke="#3a3a3a" stroke-width="1.4" stroke-linecap="round" stroke-linejoin="round"/><path d="M1573.4 28.7 L1576.2 31.8 L1579.0 28.7" fill="none" stroke="#3a3a3a" stroke-width="1.4" stroke-linecap="round" stroke-linejoin="round"/><circle cx="644.2" cy="117.2" r="6.1" fill="none" stroke="#2d84c0" stroke-width="1.4"/><path d="M642.3 115.5 q0 -1.9 1.9 -1.9 t1.9 1.8 q0 1.1 -1.1 1.7 q-0.8 0.5 -0.8 1.4" fill="none" stroke="#2d84c0" stroke-width="1.2" stroke-linecap="round"/><circle cx="644.2" cy="120.6" r="0.8" fill="#2d84c0"/><path d="M485.9 71.9 L489.3 74.9 L485.9 77.9" fill="none" stroke="#9a9a9a" stroke-width="1"/></svg><svg class="a" style="left:1470px;top:205px" width="120" height="50" viewBox="1470 205 120 50"><path d="M1494.21 230.40 A6.2 6.2 0 0 1 1505.82 229.38" fill="none" stroke="#333" stroke-width="1.2" stroke-linecap="round"/><path d="M1506.19 233.60 A6.2 6.2 0 0 1 1494.58 234.62" fill="none" stroke="#333" stroke-width="1.2" stroke-linecap="round"/><path d="M1506.12 225.54 L1506.12 229.68 L1501.98 229.68" fill="none" stroke="#333" stroke-width="1.2" stroke-linecap="round" stroke-linejoin="round"/><path d="M1494.28 238.46 L1494.28 234.32 L1498.42 234.32" fill="none" stroke="#333" stroke-width="1.2" stroke-linecap="round" stroke-linejoin="round"/><path d="M1529.8 228.6 H1532.3 V235.8 M1534.3 228.6 H1536.6 V235.8" fill="none" stroke="#fff" stroke-width="1.35" stroke-linejoin="miter"/><path d="M1555.0 230.4 L1557.7 227.3 L1560.4 230.4" fill="none" stroke="#fff" stroke-width="1.35" stroke-linecap="round" stroke-linejoin="round"/><path d="M1555.0 233.4 L1557.7 236.5 L1560.4 233.4" fill="none" stroke="#fff" stroke-width="1.35" stroke-linecap="round" stroke-linejoin="round"/><circle cx="1571.4" cy="217.8" r="5.4" fill="#b8860b"/></svg>
</div>
</body>
</html>
